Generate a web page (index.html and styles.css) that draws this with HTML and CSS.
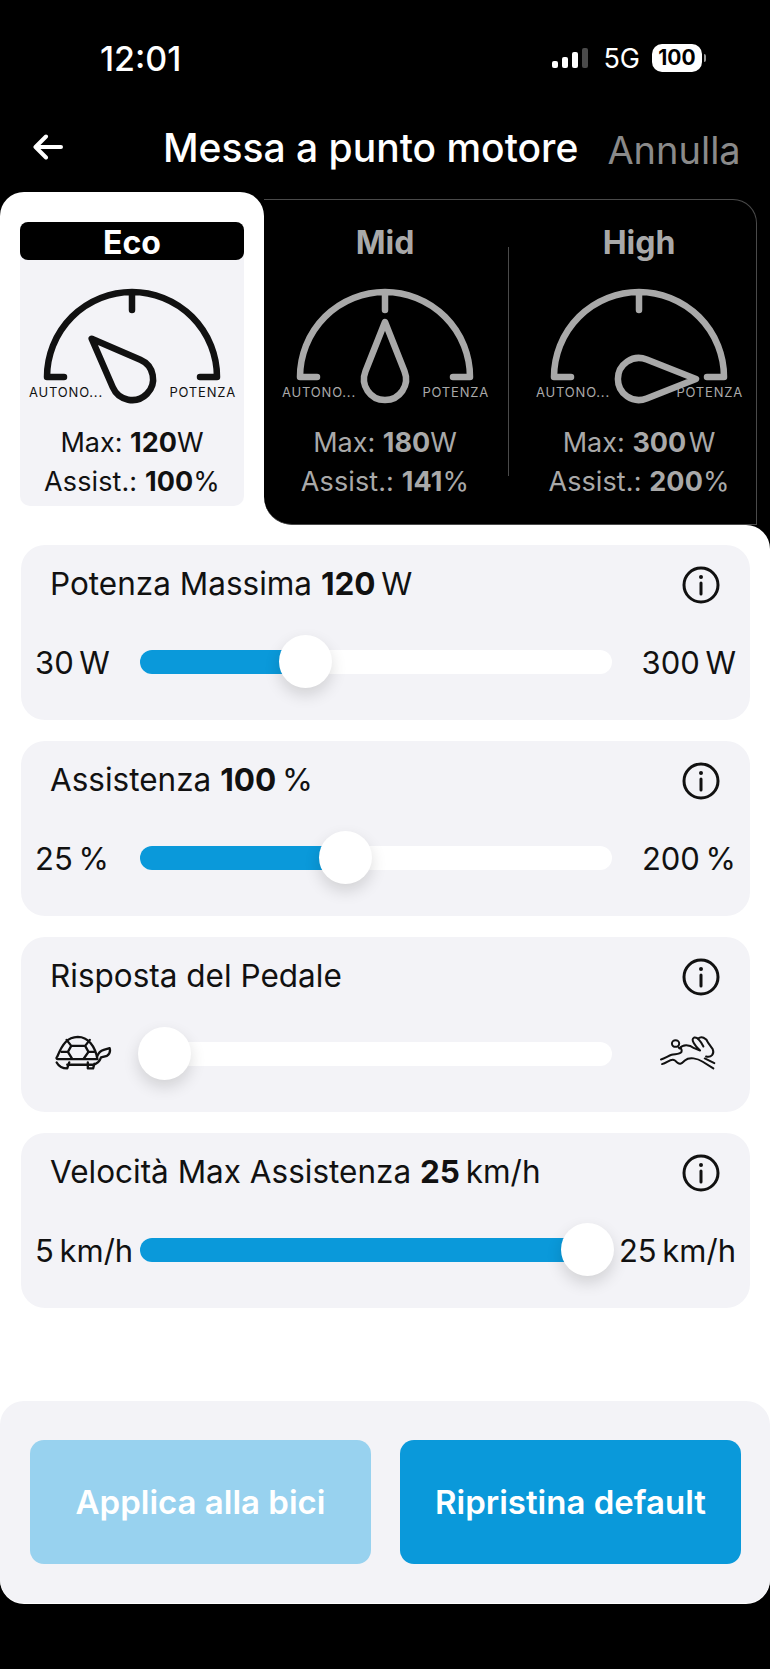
FILE: index.html
```html
<!DOCTYPE html>
<html lang="it">
<head>
    <meta charset="UTF-8">
    <meta name="viewport" content="width=device-width, initial-scale=1.0">
    <title>Messa a punto motore</title>
    <link rel="stylesheet" href="styles.css">
</head>
<body>

    <!-- Barra di stato -->
    <div class="status">
        <span class="time">12:01</span>
        <div class="status-right">
            <div class="signal"><i class="b1"></i><i class="b2"></i><i class="b3"></i><i class="b4"></i></div>
            <span class="network">5G</span>
            <span class="battery">100</span>
            <i class="battery-nub"></i>
        </div>
    </div>

    <div class="nav">
        <svg class="back" viewBox="0 0 30 26" width="30" height="26">
            <path d="M28 13H3M13 2.5 2.5 13 13 23.5" fill="none" stroke="#fff" stroke-width="4" stroke-linecap="round" stroke-linejoin="round"/>
        </svg>
        <span class="nav-title">Messa a punto motore</span>
        <span class="nav-cancel">Annulla</span>
    </div>

    <!-- Modalita -->
    <div class="tabs">
        <div class="tab-active">
            <div class="mode mode-on">
                <div class="mode-name">Eco</div>
                <svg class="gauge" viewBox="0 0 190 120" width="190" height="120">
                    <use href="#dial"/>
                    <use href="#needle" transform="translate(95 92) rotate(-45)"/>
                </svg>
                <div class="gauge-labels"><span>AUTONO...</span><span>POTENZA</span></div>
                <div class="mode-stats">
                    <p>Max: <b>120</b>W</p>
                    <p class="assist">Assist.: <b>100</b>%</p>
                </div>
            </div>
        </div>
        <div class="tab-others">
            <div class="mode">
                <div class="mode-name">Mid</div>
                <svg class="gauge" viewBox="0 0 190 120" width="190" height="120">
                    <use href="#dial"/>
                    <use href="#needle" transform="translate(95 92)"/>
                </svg>
                <div class="gauge-labels"><span>AUTONO...</span><span>POTENZA</span></div>
                <div class="mode-stats">
                    <p>Max: <b>180</b>W</p>
                    <p class="assist">Assist.: <b>141</b>%</p>
                </div>
            </div>
            <div class="divider"></div>
            <div class="mode">
                <div class="mode-name">High</div>
                <svg class="gauge" viewBox="0 0 190 120" width="190" height="120">
                    <use href="#dial"/>
                    <use href="#needle" transform="translate(95 92) rotate(90)"/>
                </svg>
                <div class="gauge-labels"><span>AUTONO...</span><span>POTENZA</span></div>
                <div class="mode-stats">
                    <p>Max: <b>300</b>&#8202;W</p>
                    <p class="assist">Assist.: <b>200</b>%</p>
                </div>
            </div>
        </div>
    </div>

    <div class="panel">
        <div class="cards">

            <div class="card">
                <div class="card-head">
                    <span>Potenza Massima <b>120</b>&thinsp;W</span>
                    <svg class="info" viewBox="0 0 38 38" width="38" height="38"><use href="#info"/></svg>
                </div>
                <div class="slider-row">
                    <span>30&thinsp;W</span>
                    <div class="track" style="--pos: 35%"><div class="fill"></div><div class="thumb"></div></div>
                    <span class="right">300&thinsp;W</span>
                </div>
            </div>

            <div class="card">
                <div class="card-head">
                    <span>Assistenza <b>100</b>&thinsp;%</span>
                    <svg class="info" viewBox="0 0 38 38" width="38" height="38"><use href="#info"/></svg>
                </div>
                <div class="slider-row">
                    <span>25&thinsp;%</span>
                    <div class="track" style="--pos: 43.4%"><div class="fill"></div><div class="thumb"></div></div>
                    <span class="right">200&thinsp;%</span>
                </div>
            </div>

            <div class="card">
                <div class="card-head">
                    <span>Risposta del Pedale</span>
                    <svg class="info" viewBox="0 0 38 38" width="38" height="38"><use href="#info"/></svg>
                </div>
                <div class="slider-row">
                    <svg class="turtle" viewBox="160 105 175 110" width="58" height="37">
                        <g fill="none" stroke="#111" stroke-width="7" stroke-linecap="round" stroke-linejoin="round">
                            <path d="M170 172C185 135 200 114 232 113 262 113 284 140 291 180H172Q164 178 170 172"/>
                            <path d="M212 140H254L264 158 250 178M212 140 202 158 214 178M254 140 268 122M212 140 198 122M202 158H182M264 158H282"/>
                            <path d="M290 172Q296 156 310 152L328 147Q332 162 320 170L302 175Q296 192 280 197H200"/>
                            <path d="M168 190Q178 208 200 208L206 190M262 190V208H278L282 194"/>
                        </g>
                    </svg>
                    <div class="track" style="--pos: 5%"><div class="thumb"></div></div>
                    <svg class="rabbit" viewBox="175 105 175 110" width="58" height="37">
                        <g fill="none" stroke="#111" stroke-width="6" stroke-linecap="round" stroke-linejoin="round">
                            <path d="M184 181C196 178 206 170 216 167 228 164 240 166 246 158 248 150 244 146 238 146"/>
                            <ellipse cx="228" cy="133" rx="11" ry="10"/>
                            <path d="M240 148C250 134 270 136 284 147L302 154C286 138 272 120 284 115 296 112 306 130 312 142"/>
                            <path d="M296 118C306 110 320 115 326 130L340 150C346 165 336 176 320 172"/>
                            <path d="M187 195C205 190 214 176 226 184 240 200 246 194 256 184 270 172 294 178 310 188L342 208M316 178 345 192"/>
                        </g>
                    </svg>
                </div>
            </div>

            <div class="card">
                <div class="card-head">
                    <span>Velocità Max Assistenza <b>25</b>&thinsp;km/h</span>
                    <svg class="info" viewBox="0 0 38 38" width="38" height="38"><use href="#info"/></svg>
                </div>
                <div class="slider-row">
                    <span>5&thinsp;km/h</span>
                    <div class="track" style="--pos: 94.7%"><div class="fill"></div><div class="thumb"></div></div>
                    <span class="right">25&thinsp;km/h</span>
                </div>
            </div>

        </div>

        <div class="footer">
            <button class="btn btn-off" type="button">Applica alla bici</button>
            <button class="btn" type="button">Ripristina default</button>
        </div>
    </div>

    <!-- Simboli riusati -->
    <svg class="defs" width="0" height="0">
        <defs>
            <g id="dial" fill="none" stroke="currentColor" stroke-width="6.5" stroke-linecap="round" stroke-linejoin="round">
                <path d="M27 90H10A85 85 0 0 1 180 90H163M95 5V23"/>
            </g>
            <path id="needle" d="M0-57 19.5-7.7A21 21 0 1 1-19.5-7.7Z" fill="none" stroke="currentColor" stroke-width="6.5" stroke-linejoin="round"/>
            <g id="info" fill="none" stroke="#111" stroke-width="3" stroke-linecap="round">
                <circle cx="19" cy="19" r="17"/>
                <path d="M19 17V28"/>
                <circle cx="19" cy="11" r="1" fill="#111" stroke-width="2"/>
            </g>
        </defs>
    </svg>

</body>
</html>
```

FILE: styles.css
```css
body {
    margin: 0;
    width: 770px;
    height: 1669px;
    overflow: hidden;
    background-color: #000;
    color: #111;
    font-family: Inter, "Liberation Sans", sans-serif;
}
p {
    margin: 0;
}

/* barra di stato */
.status {
    height: 116px;
    padding: 0 64px 0 100px;
    display: flex;
    justify-content: space-between;
    align-items: center;
    color: #fff;
}
.time {
    font-size: 34px;
    font-weight: 500;
}
.status-right {
    display: flex;
    align-items: center;
}
.signal {
    display: flex;
    align-items: flex-end;
    gap: 4px;
    height: 20px;
    margin-right: 15px;
}
.signal i {
    width: 6px;
    border-radius: 2px;
    background-color: #fff;
}
.signal .b1 { height: 7px; }
.signal .b2 { height: 11px; }
.signal .b3 { height: 16px; }
.signal .b4 { height: 20px; background-color: #4a4a4a; }
.network {
    font-size: 27px;
    margin-right: 12px;
}
.battery {
    width: 50px;
    height: 28px;
    line-height: 28px;
    border-radius: 10px;
    background-color: #fff;
    color: #000;
    font-size: 21px;
    font-weight: 700;
    text-align: center;
}
.battery-nub {
    width: 2px;
    height: 8px;
    margin-left: 2px;
    border-radius: 0 2px 2px 0;
    background-color: #999;
}

/* intestazione */
.nav {
    height: 62px;
    margin-bottom: 14px;
    padding-left: 33px;
    display: flex;
    align-items: center;
    color: #fff;
    white-space: nowrap;
}
.back {
    margin-right: 100px;
}
.nav-title {
    font-size: 39px;
    font-weight: 500;
}
.nav-cancel {
    margin-left: 29px;
    margin-top: 6px;
    font-size: 38px;
    color: #8a8a8a;
}

/* modalita */
.tabs {
    height: 333px;
    display: flex;
    background: linear-gradient(#fff, #fff) 264px 100% / 30px 30px no-repeat;
}
.tab-active {
    width: 264px;
    padding: 30px 20px 0;
    box-sizing: border-box;
    background-color: #fff;
    border-radius: 24px 24px 0 0;
}
.tab-others {
    width: 493px;
    margin-top: 7px;
    padding: 22px 0 0 9px;
    box-sizing: border-box;
    display: flex;
    background-color: #000;
    border: 1px solid #4a4a4a;
    border-left: none;
    border-radius: 0 24px 0 28px;
    color: #a9a9a9;
}
.mode {
    width: 224px;
    height: 284px;
    display: flex;
    flex-direction: column;
    align-items: center;
}
.mode-on {
    background-color: #f3f3f7;
    border-radius: 10px;
    color: #111;
}
.mode-name {
    width: 100%;
    height: 38px;
    line-height: 41px;
    border-radius: 8px;
    font-size: 32px;
    font-weight: 700;
    text-align: center;
}
.mode-on .mode-name {
    background-color: #000;
    color: #fff;
}
.gauge {
    margin-top: 27px;
    flex-shrink: 0;
}
.gauge-labels {
    width: 100%;
    margin-top: -23px;
    padding: 0 8px 0 9px;
    box-sizing: border-box;
    display: flex;
    justify-content: space-between;
    height: 16px;
    line-height: 16px;
    font-size: 13px;
    letter-spacing: 0.8px;
}
.mode-stats {
    margin-top: 23px;
    font-size: 27px;
    line-height: 39px;
    text-align: center;
    white-space: nowrap;
}
.assist {
    letter-spacing: 0.1px;
}
.divider {
    width: 1px;
    height: 229px;
    margin: 25px 18px 0 11px;
    background-color: #4a4a4a;
}

/* pannello bianco */
.panel {
    height: 1079px;
    box-sizing: border-box;
    padding-top: 20px;
    background-color: #fff;
    border-radius: 0 24px 24px 24px;
}
.cards {
    margin: 0 20px 0 21px;
    display: flex;
    flex-direction: column;
    gap: 21px;
}
.card {
    height: 175px;
    padding: 22px 14px 0;
    box-sizing: border-box;
    background-color: #f3f3f7;
    border-radius: 24px;
}
.card-head {
    height: 36px;
    padding: 0 0 0 15px;
    display: flex;
    justify-content: space-between;
    align-items: center;
    font-size: 31.5px;
}
.card-head span {
    margin-top: -4px;
}
.info {
    margin: -1px 16px 0 0;
}
.slider-row {
    margin-top: 33px;
    display: grid;
    grid-template-columns: 105px 472px 1fr;
    align-items: center;
    height: 53px;
    font-size: 31px;
    white-space: nowrap;
}
.right {
    text-align: right;
}
.track {
    position: relative;
    height: 24px;
    margin-top: -2px;
    border-radius: 12px;
    background-color: #fff;
}
.fill {
    width: var(--pos);
    height: 100%;
    border-radius: 12px;
    background-color: #0a99da;
}
.thumb {
    position: absolute;
    top: -15px;
    left: var(--pos);
    width: 53px;
    height: 53px;
    margin-left: -26px;
    border-radius: 50%;
    background-color: #fff;
    box-shadow: 0 7px 16px rgba(0, 0, 0, 0.14);
}
.turtle {
    margin: -5px 0 0 19px;
}
.rabbit {
    justify-self: end;
    margin: -4px 20px 0 0;
}

/* pulsanti */
.footer {
    margin-top: 93px;
    height: 202px;
    padding: 39px 29px 0 30px;
    box-sizing: border-box;
    display: flex;
    gap: 29px;
    background-color: #f3f3f7;
    border-radius: 24px;
}
.btn {
    flex: 1;
    height: 124px;
    border: none;
    border-radius: 14px;
    background-color: #0a99da;
    color: #fff;
    font-family: inherit;
    font-size: 33px;
    font-weight: 600;
}
.btn-off {
    background-color: #98d2ef;
}
.defs {
    position: absolute;
}
```
